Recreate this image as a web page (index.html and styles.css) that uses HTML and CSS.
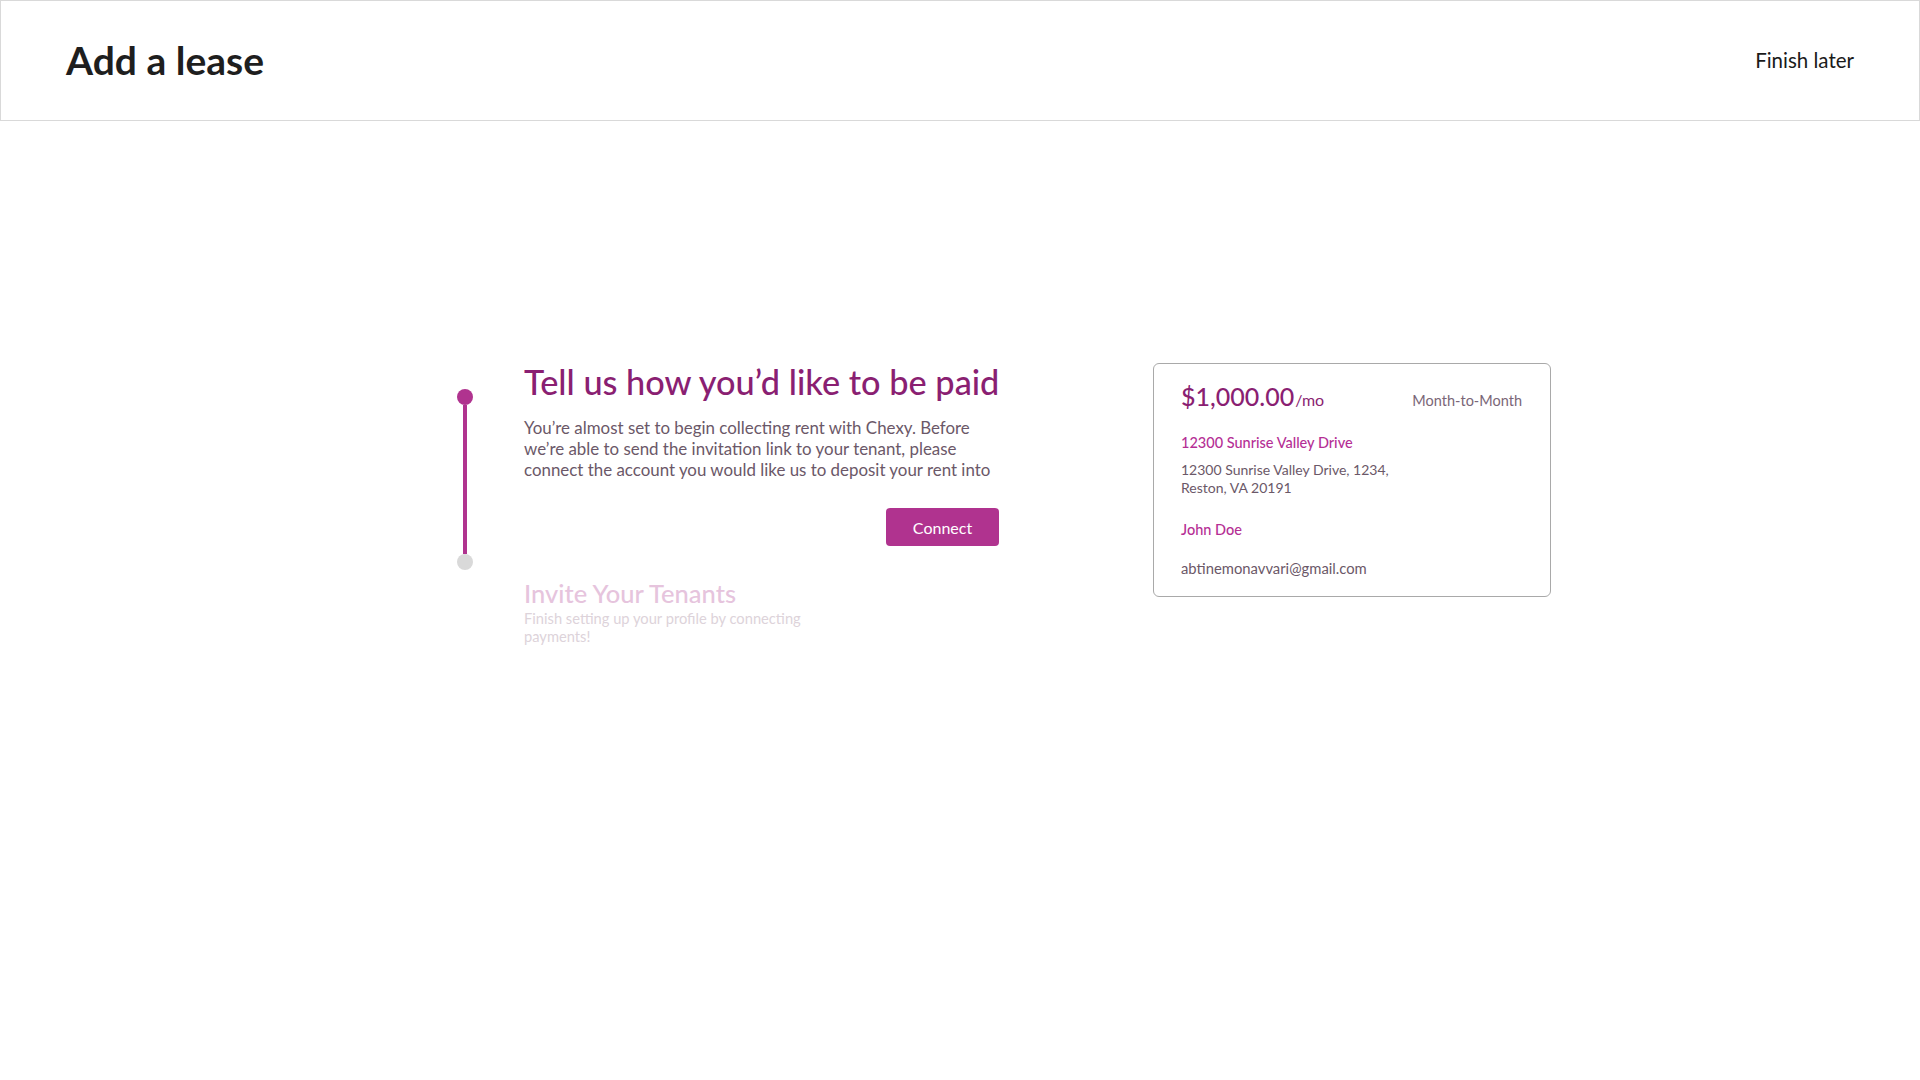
FILE: index.html
```html
<!DOCTYPE html>
<html lang="en">
<head>
<meta charset="utf-8">
<title>Add a lease</title>
<link rel="stylesheet" href="styles.css">
</head>
<body>
<header class="topbar">
  <h1 class="page-title">Add a lease</h1>
  <a class="finish-later" href="#">Finish later</a>
</header>
<main class="main">
  <div class="layout">
    <div class="stepper">
      <div class="track">
        <span class="dot dot-active"></span>
        <span class="bar"></span>
        <span class="dot dot-idle"></span>
      </div>
      <div class="steps">
        <section class="step step-current">
          <h2 class="step-title">Tell us how you’d like to be paid</h2>
          <p class="step-text">You’re almost set to begin collecting rent with Chexy. Before we’re able to send the invitation link to your tenant, please connect the account you would like us to deposit your rent into</p>
          <div class="actions"><button class="btn-connect" type="button">Connect</button></div>
        </section>
        <section class="step step-next">
          <h3 class="next-title">Invite Your Tenants</h3>
          <p class="next-text">Finish setting up your profile by connecting payments!</p>
        </section>
      </div>
    </div>
    <aside class="lease-card">
      <div class="card-top">
        <div class="price"><span class="amount">$1,000.00</span><span class="per">/mo</span></div>
        <div class="term">Month-to-Month</div>
      </div>
      <div class="prop-name">12300 Sunrise Valley Drive</div>
      <div class="prop-address">12300 Sunrise Valley Drive, 1234, Reston, VA 20191</div>
      <div class="tenant-name">John Doe</div>
      <div class="tenant-email">abtinemonavvari@gmail.com</div>
    </aside>
  </div>
</main>
</body>
</html>
```
FILE: styles.css
```css
* { box-sizing: border-box; }
html, body { margin: 0; padding: 0; background: #ffffff; }
body { font-family: "Lato", "Inter", "Liberation Sans", sans-serif; color: #1f1f1f; }

.topbar {
  height: 121px;
  border: 1px solid #d9d9d9;
  display: flex;
  align-items: center;
  justify-content: space-between;
  padding: 0 65px 0 65px;
}
.page-title {
  margin: 0;
  font-size: 39px;
  font-weight: 700;
  line-height: 1.2;
  color: #1e1e1e;
}
.finish-later {
  font-size: 20.5px;
  line-height: 1.2;
  color: #1a1a1a;
  text-decoration: none;
}

.main { padding: 242px 0 0 457px; }
.layout { display: flex; align-items: flex-start; }

.stepper { display: flex; width: 696px; }
.track {
  width: 16px;
  padding-top: 26px;
  display: flex;
  flex-direction: column;
  align-items: center;
}
.dot { width: 16px; height: 16px; border-radius: 50%; display: block; }
.dot-active { background: #b0338f; }
.dot-idle { background: #d9d9d9; }
.bar { width: 4px; height: 149px; background: #b0338f; display: block; }

.steps { margin-left: 51px; width: 475px; }
.step-title {
  margin: 0;
  font-size: 34.3px;
  font-weight: 500;
  line-height: 37px;
  color: #8a1f72;
  white-space: nowrap;
}
.step-text {
  margin: 17px 0 0;
  font-size: 16.9px;
  line-height: 21px;
  color: #6b5868;
}
.actions { display: flex; justify-content: flex-end; margin-top: 28px; }
.btn-connect {
  width: 113px;
  height: 38px;
  border: 0;
  border-radius: 4px;
  background: #b0338f;
  color: #ffffff;
  font-family: inherit;
  font-size: 16px;
  cursor: pointer;
}
.step-next { margin-top: 32px; }
.next-title {
  margin: 0;
  font-size: 25.5px;
  font-weight: 500;
  line-height: 30px;
  color: #e6c4dd;
}
.next-text {
  margin: 1px 0 0;
  width: 295px;
  font-size: 14.7px;
  line-height: 18px;
  color: #ddd3da;
}

.lease-card {
  width: 398px;
  height: 234px;
  border: 1px solid #a9a9a9;
  border-radius: 6px;
  padding: 17px 28px 16px 27px;
}
.card-top { display: flex; justify-content: space-between; align-items: baseline; }
.price { line-height: 30px; color: #8a1f72; }
.amount { font-size: 25px; font-weight: 500; }
.per { font-size: 16px; margin-left: 1px; }
.term { font-size: 14.5px; color: #7a6677; }
.prop-name {
  margin-top: 19px;
  font-size: 14.5px;
  font-weight: 500;
  line-height: 18px;
  color: #b52f95;
}
.prop-address {
  margin-top: 9px;
  width: 220px;
  font-size: 14px;
  line-height: 18px;
  color: #6b5868;
}
.tenant-name {
  margin-top: 24px;
  font-size: 14.5px;
  font-weight: 500;
  line-height: 18px;
  color: #b52f95;
}
.tenant-email {
  margin-top: 20px;
  font-size: 14.8px;
  line-height: 18px;
  color: #6b5868;
}
```
